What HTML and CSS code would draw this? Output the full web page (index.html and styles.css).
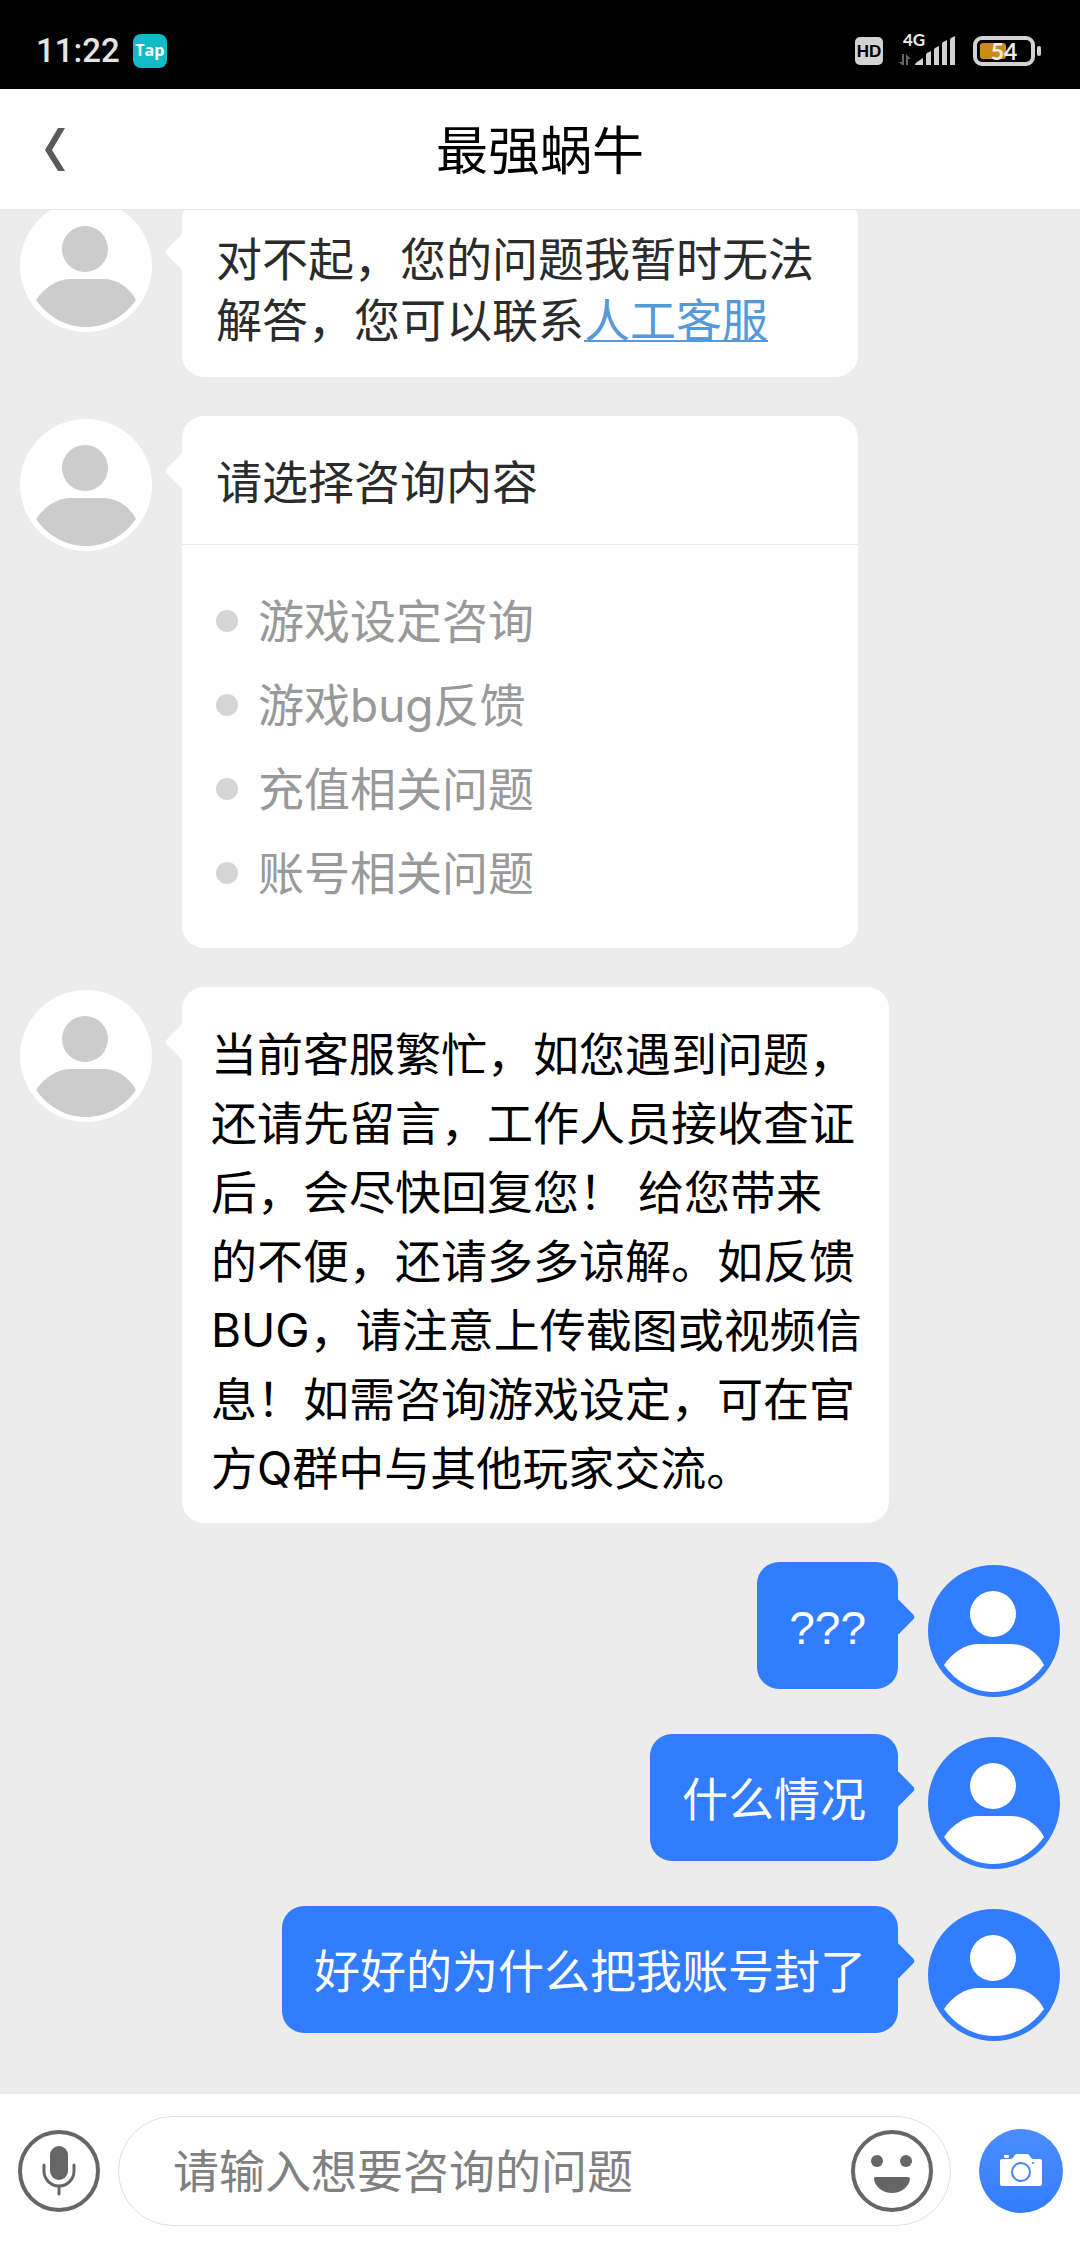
FILE: index.html
```
<!DOCTYPE html>
<html lang="zh-CN">
<head>
  <meta charset="UTF-8">
  <meta name="viewport" content="width=device-width, initial-scale=1">
  <title>最强蜗牛</title>
  <link rel="stylesheet" href="styles.css">
</head>
<body>
  <!-- 头像图形，左右两侧共用 -->
  <svg class="defs" aria-hidden="true">
    <symbol id="person" viewBox="0 0 132 132">
      <circle cx="65" cy="49" r="23"/>
      <path d="M16 100C25 87 37 79 51 79H83C97 79 109 87 116 100C104 117 86 127 66 127C46 127 28 117 16 100Z"/>
    </symbol>
  </svg>

  <div class="status-bar">
    <span class="time">11:22</span>
    <span class="tap">Tap</span>
    <div class="status-icons">
      <span class="hd">HD</span>
      <svg class="signal" width="58" height="40" viewBox="0 -6 58 40">
        <text x="4" y="12" font-size="17">4G</text>
        <path fill="#666" d="M3 31L0 28H3V20H5V31ZM7 31V20L12 25H9V31Z"/>
        <path d="M16 31Q16 29 18 28L24 24V31ZM27 31V21Q27 20 28 19L32 17V31ZM35 31V16Q35 15 36 14L40 12V31ZM43 31V10Q43 9 44 8L48 6V31ZM51 31V6Q51 5 52 4L56 2V31Z"/>
      </svg>
      <svg class="battery" width="69" height="30" viewBox="0 0 69 30">
        <rect x="2" y="2" width="58" height="26" rx="7" fill="none" stroke="#d2d2d2" stroke-width="4"/>
        <rect x="64" y="10" width="4" height="10" rx="2" fill="#d2d2d2"/>
        <rect x="7" y="7" width="26" height="16" rx="3" fill="#ce8a18"/>
        <text x="31" y="24" font-size="23" text-anchor="middle">54</text>
      </svg>
    </div>
  </div>

  <header class="header">
    <button class="back" type="button" aria-label="返回">
      <svg width="20" height="43" viewBox="0 0 20 43"><path fill="#5a5a5a" d="M13 0H20L7 22L20 43H13L0 22Z"/></svg>
    </button>
    <h1>最强蜗牛</h1>
  </header>

  <main class="chat">
    <div class="row">
      <svg class="avatar"><use href="#person"/></svg>
      <div class="bubble">
        <p class="reply">对不起，您的问题我暂时无法解答，您可以联系<a href="#service">人工客服</a></p>
      </div>
    </div>

    <div class="row">
      <svg class="avatar"><use href="#person"/></svg>
      <div class="bubble">
        <h2>请选择咨询内容</h2>
        <ul class="topics">
          <li><a href="#setting">游戏设定咨询</a></li>
          <li><a href="#bug">游戏bug反馈</a></li>
          <li><a href="#recharge">充值相关问题</a></li>
          <li><a href="#account">账号相关问题</a></li>
        </ul>
      </div>
    </div>

    <div class="row">
      <svg class="avatar"><use href="#person"/></svg>
      <div class="bubble notice">当前客服繁忙，如您遇到问题，还请先留言，工作人员接收查证后，会尽快回复您！ 给您带来的不便，还请多多谅解。如反馈BUG，请注意上传截图或视频信息！如需咨询游戏设定，可在官方Q群中与其他玩家交流。</div>
    </div>

    <div class="row mine">
      <svg class="avatar"><use href="#person"/></svg>
      <div class="bubble">???</div>
    </div>
    <div class="row mine">
      <svg class="avatar"><use href="#person"/></svg>
      <div class="bubble">什么情况</div>
    </div>
    <div class="row mine">
      <svg class="avatar"><use href="#person"/></svg>
      <div class="bubble">好好的为什么把我账号封了</div>
    </div>
  </main>

  <form class="composer">
    <button type="button" aria-label="语音">
      <svg width="84" height="84" viewBox="0 0 84 84">
        <circle cx="42" cy="42" r="39" fill="none" stroke="#666" stroke-width="4"/>
        <rect x="33" y="17" width="18" height="34" rx="9" fill="#666"/>
        <path d="M27 36V42A15 15 0 0 0 57 42V36M42 57V65" fill="none" stroke="#666" stroke-width="3" stroke-linecap="round"/>
      </svg>
    </button>
    <div class="field">
      <input type="text" aria-label="咨询的问题" placeholder="请输入想要咨询的问题">
      <button type="button" aria-label="表情">
        <svg width="84" height="84" viewBox="0 0 84 84">
          <circle cx="42" cy="42" r="39" fill="none" stroke="#666" stroke-width="4"/>
          <g fill="#666">
            <circle cx="27" cy="32" r="6"/>
            <circle cx="56" cy="32" r="6"/>
            <path d="M25 48H58Q60 48 60 50C59 58 51 64 42 64C33 64 25 58 24 50Q24 48 25 48Z"/>
          </g>
        </svg>
      </button>
    </div>
    <button type="button" aria-label="拍照">
      <svg width="84" height="84" viewBox="0 0 84 84">
        <defs>
          <linearGradient id="blue" x1="0" y1="0" x2="0" y2="1">
            <stop offset="0" stop-color="#4c8dff"/>
            <stop offset="1" stop-color="#327dff"/>
          </linearGradient>
        </defs>
        <circle cx="42" cy="42" r="42" fill="url(#blue)"/>
        <path fill="#fff" d="M23 30H31Q34 30 35 27Q36 25 38 25H48Q50 25 51 27Q52 30 55 30H61Q63 30 63 32V55Q63 57 61 57H23Q21 57 21 55V32Q21 30 23 30Z"/>
        <rect x="25" y="26" width="5" height="3" rx="1" fill="#fff"/>
        <circle cx="42" cy="43" r="9" fill="none" stroke="#4385fb" stroke-width="2"/>
        <circle cx="54" cy="34" r="1" fill="#327dff"/>
      </svg>
    </button>
  </form>
</body>
</html>
```
FILE: styles.css
```
* {
  box-sizing: border-box;
}
body {
  margin: 0;
  min-height: 100vh;
  display: flex;
  flex-direction: column;
  background: #ececec;
  color: #2b2b2b;
  font-family: Inter, "Noto Sans CJK SC", sans-serif;
  font-size: 46px;
  line-height: 61px;
}
h1, h2, p, ul {
  margin: 0;
  padding: 0;
  font-size: inherit;
  font-weight: normal;
}
svg {
  display: block;
  flex: none;
}
button {
  flex: none;
  padding: 0;
  border: none;
  background: none;
  cursor: pointer;
}
.defs {
  position: absolute;
  width: 0;
  height: 0;
}

/* 状态栏 */
.status-bar {
  display: flex;
  align-items: center;
  height: 89px;
  padding: 12px 38px 0 36px;
  background: #000;
  color: #e4e4e4;
  line-height: 34px;
}
.time {
  font-family: Roboto, sans-serif;
  font-size: 33px;
  font-weight: 500;
}
.tap {
  width: 34px;
  height: 34px;
  margin-left: 13px;
  border-radius: 8px;
  background: #14b9c8;
  color: #fff;
  font: bold 16px/32px "Open Sans", sans-serif;
  text-align: center;
}
.status-icons {
  display: flex;
  align-items: center;
  gap: 16px;
  margin-left: auto;
  fill: #d2d2d2;
  font-family: Lato, sans-serif;
  font-weight: bold;
}
.status-icons text {
  fill: #eee;
}
.signal {
  margin-top: -6px;
}
.hd {
  width: 28px;
  height: 28px;
  border-radius: 5px;
  background: #d2d2d2;
  color: #000;
  font: bold 17px/29px "Liberation Sans", sans-serif;
  text-align: center;
}

.header {
  display: grid;
  grid-template-columns: 110px 1fr 110px;
  align-items: center;
  height: 121px;
  background: #fff;
  border-bottom: 1px solid #e6e6e6;
}
.header h1 {
  padding-top: 4px;
  color: #000;
  font-size: 52px;
  text-align: center;
}
.back {
  justify-self: center;
}

/* 聊天记录 */
.chat {
  flex: 1;
  display: flex;
  flex-direction: column;
  gap: 39px;
  overflow: hidden;
  padding: 0 20px 55px;
}
.row {
  display: flex;
  align-items: flex-start;
  gap: 30px;
}
.row:first-child {
  margin-top: -13px;
}
.avatar {
  width: 132px;
  height: 132px;
  margin: 3px 0 -2px;
  border-radius: 50%;
  background: #fff;
  fill: #ccc;
}
.bubble {
  position: relative;
  width: 65%;
  border-radius: 22px;
  background: #fff;
}
.bubble::before {
  content: "";
  position: absolute;
  top: 41px;
  left: -12px;
  width: 28px;
  height: 28px;
  border-radius: 4px;
  background: inherit;
  transform: rotate(45deg);
}
.reply {
  padding: 32px 34px 26px;
}
.reply a {
  color: #5599d8;
  text-decoration-thickness: 2px;
  text-underline-offset: 3px;
}
.bubble h2 {
  padding: 36px 34px 31px;
  border-bottom: 1px solid #e8e8e8;
}
.topics {
  padding: 34px 34px 33px;
  list-style: none;
}
.topics li {
  display: flex;
  align-items: center;
  gap: 20px;
  height: 84px;
}
.topics li::before {
  content: "";
  width: 22px;
  height: 22px;
  border-radius: 50%;
  background: #d5d5d5;
}
.topics a {
  color: #999;
  text-decoration: none;
}
.notice {
  width: 68%;
  padding: 33px 25px 20px 29px;
  color: #000;
  line-height: 69px;
}

.mine {
  flex-direction: row-reverse;
}
.mine .avatar {
  background: #327dff;
  fill: #fff;
}
.mine .bubble {
  width: auto;
  padding: 36px 32px 30px;
  background: #327dff;
  color: #fff;
  font-family: "Liberation Sans", "Noto Sans CJK SC", sans-serif;
}
.mine .bubble::before {
  left: auto;
  right: -12px;
}

/* 底部输入栏 */
.composer {
  display: flex;
  align-items: center;
  gap: 17px;
  padding: 22px 17px;
  background: #fff;
}
.field {
  flex: 1;
  display: flex;
  align-items: center;
  min-width: 0;
  height: 110px;
  margin-right: 11px;
  padding: 0 16px 0 54px;
  border: 1px solid #e0e0e0;
  border-radius: 55px;
}
.field input {
  flex: 1;
  min-width: 0;
  padding: 0;
  border: none;
  outline: none;
  background: none;
  color: #2b2b2b;
  font: inherit;
}
.field input::placeholder {
  color: #808080;
}
```
